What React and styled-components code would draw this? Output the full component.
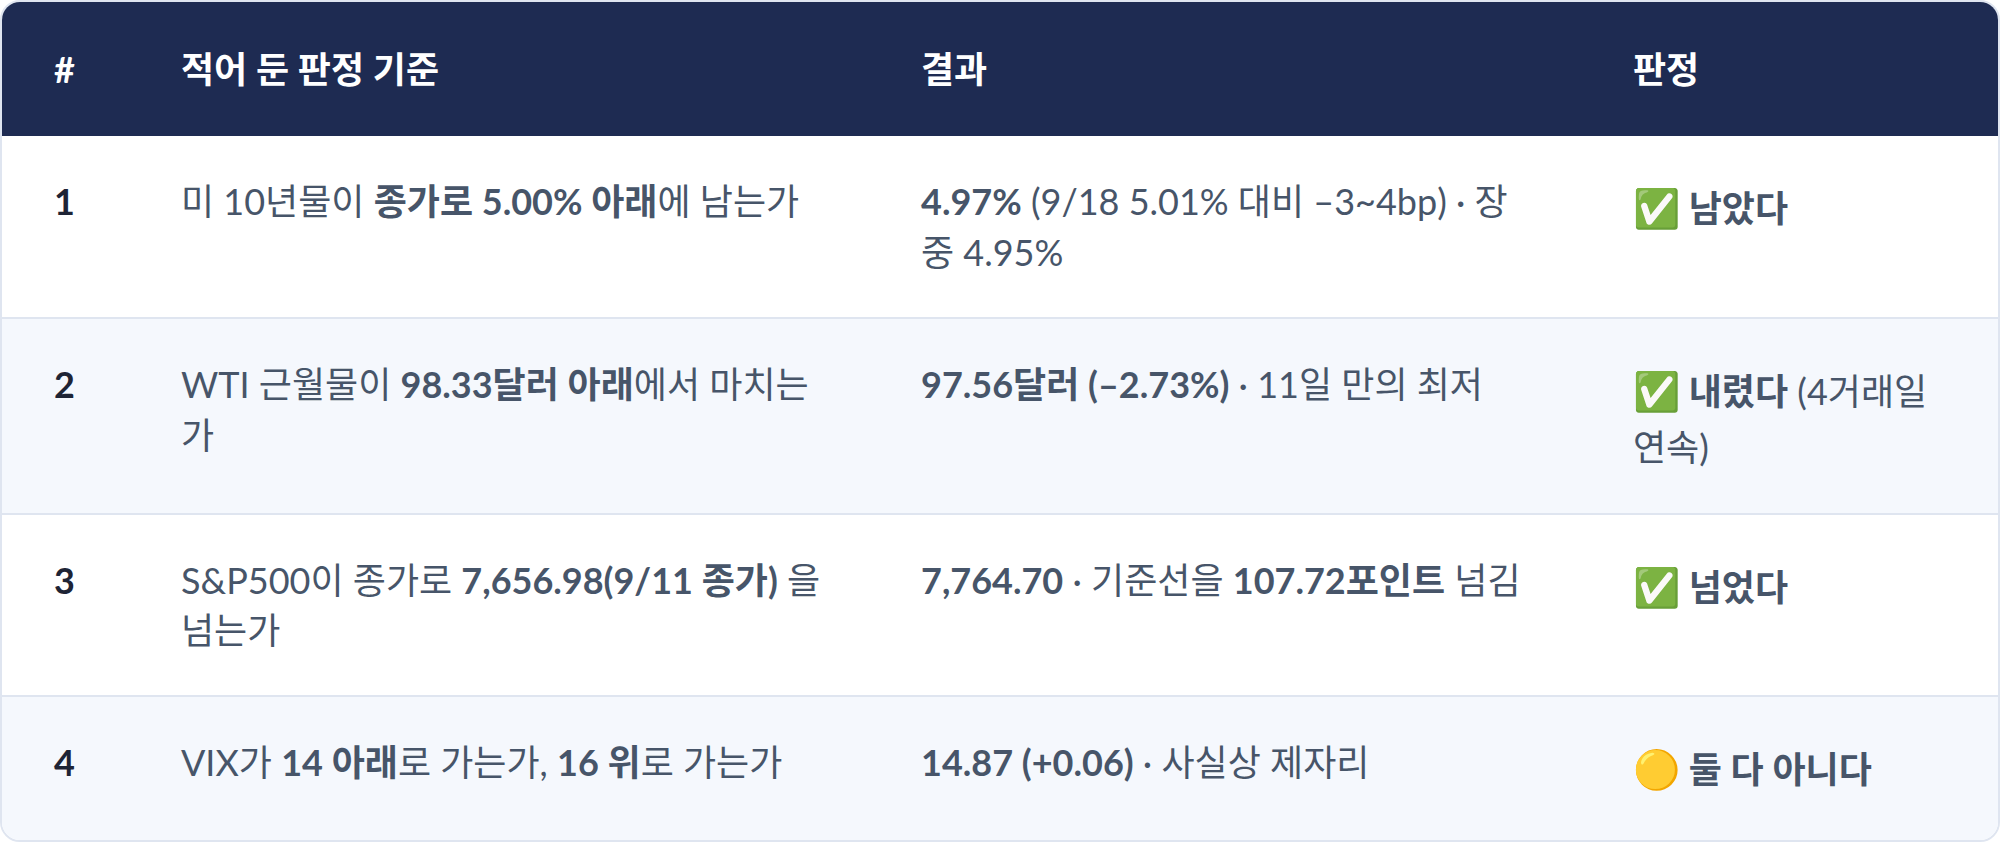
import React from "react";
import styled, { createGlobalStyle } from "styled-components";

const Global = createGlobalStyle`
  html, body { margin: 0; padding: 0; background: #ffffff; }
  body { font-family: Lato, "Noto Sans CJK KR", sans-serif; }
`;

const Frame = styled.div`
  width: 2000px;
  box-sizing: border-box;
  border: 2px solid #dfe5f0;
  border-radius: 20px;
  overflow: hidden;
  background: #ffffff;
`;

const Table = styled.table`
  width: 100%;
  table-layout: fixed;
  border-collapse: separate;
  border-spacing: 0;
  font-family: Lato, "Noto Sans CJK KR", sans-serif;
  font-size: 36px;
  line-height: 1.4;
  color: #475569;
`;

const HeadCell = styled.th`
  background: #1e2b52;
  color: #ffffff;
  font-weight: 700;
  text-align: left;
  padding: 42px 52px;
  vertical-align: top;
`;

const Row = styled.tr`
  background: ${(p) => (p.$alt ? "#f5f8fd" : "#ffffff")};
`;

const Cell = styled.td`
  padding: 40px ${(p) => (p.$tight ? "44px" : "52px")} 40px 52px;
  vertical-align: top;
  border-bottom: ${(p) => (p.$last ? "none" : "2px solid #dfe5f0")};
  color: ${(p) => (p.$num ? "#1e2435" : "#475569")};
  font-weight: ${(p) => (p.$num ? 700 : 400)};
`;

const B = styled.b`
  font-weight: 700;
`;

const Verdict = styled.span`
  font-weight: 700;
  color: #475569;
`;

const Emoji = styled.span`
  font-size: 38px;
  line-height: 63px;
  font-weight: 400;
`;

const rows = [
  {
    n: "1",
    crit: (
      <>
        미 10년물이 <B>종가로 5.00% 아래</B>에 남는가
      </>
    ),
    res: (
      <>
        <B>4.97%</B> (9/18 5.01% 대비 –3~4bp) · 장중 4.95%
      </>
    ),
    mark: "✅",
    label: "남았다",
  },
  {
    n: "2",
    crit: (
      <>
        WTI 근월물이 <B>98.33달러 아래</B>에서 마치는가
      </>
    ),
    res: (
      <>
        <B>97.56달러 (–2.73%)</B> · 11일 만의 최저
      </>
    ),
    mark: "✅",
    label: "내렸다",
    note: " (4거래일 연속)",
  },
  {
    n: "3",
    crit: (
      <>
        S&amp;P500이 종가로 <B>7,656.98(9/11 종가)</B> 을 넘는가
      </>
    ),
    res: (
      <>
        <B>7,764.70</B> · 기준선을 <B>107.72포인트</B> 넘김
      </>
    ),
    mark: "✅",
    label: "넘었다",
  },
  {
    n: "4",
    crit: (
      <>
        VIX가 <B>14 아래</B>로 가는가, <B>16 위</B>로 가는가
      </>
    ),
    res: (
      <>
        <B>14.87 (+0.06)</B> · 사실상 제자리
      </>
    ),
    mark: "🟡",
    label: "둘 다 아니다",
  },
];

export default function App() {
  return (
    <>
      <Global />
      <Frame>
        <Table>
          <colgroup>
            <col style={{ width: "127px" }} />
            <col style={{ width: "740px" }} />
            <col style={{ width: "712px" }} />
            <col />
          </colgroup>
          <thead>
            <tr>
              <HeadCell>#</HeadCell>
              <HeadCell>적어 둔 판정 기준</HeadCell>
              <HeadCell>결과</HeadCell>
              <HeadCell>판정</HeadCell>
            </tr>
          </thead>
          <tbody>
            {rows.map((r, i) => {
              const last = i === rows.length - 1;
              return (
                <Row key={r.n} $alt={i % 2 === 1}>
                  <Cell $num $last={last}>{r.n}</Cell>
                  <Cell $tight $last={last}>{r.crit}</Cell>
                  <Cell $last={last}>{r.res}</Cell>
                  <Cell $last={last}>
                    <Verdict>
                      <Emoji>{r.mark}</Emoji> {r.label}
                    </Verdict>
                    {r.note}
                  </Cell>
                </Row>
              );
            })}
          </tbody>
        </Table>
      </Frame>
    </>
  );
}
